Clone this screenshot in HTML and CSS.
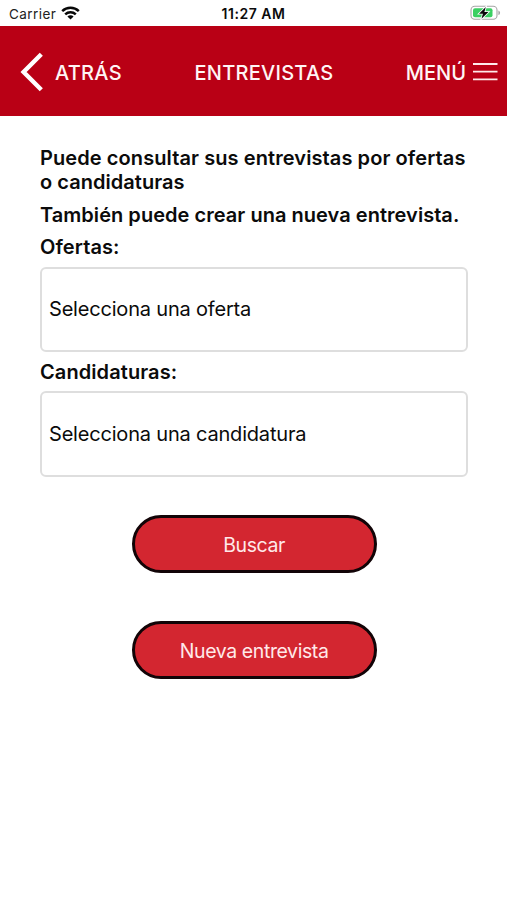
FILE: index.html
```html
<!DOCTYPE html>
<html lang="es">
<head>
<meta charset="utf-8">
<title>Entrevistas</title>
<link rel="stylesheet" href="styles.css">
</head>
<body>
<div class="status">
  <div class="carrier"><span class="carrier-name">Carrier</span>
    <svg class="wifi" width="19" height="14" viewBox="0 0 19 14" fill="none" stroke="#080808" stroke-width="2.5">
      <path d="M1.2 5.1a12 12 0 0 1 16.6 0M4.2 8.3a7.7 7.7 0 0 1 10.6 0"/>
      <path d="M9.5 13.6 6.4 10.5a4.4 4.4 0 0 1 6.2 0z" fill="#080808" stroke="none"/>
    </svg>
  </div>
  <div class="time">11:27 AM</div>
  <svg class="battery" width="31" height="16" viewBox="0 0 31 16">
    <rect x="1" y="1.3" width="26" height="13" rx="3.8" fill="#fff" stroke="#a5a5a5" stroke-width="1.1"/>
    <path d="M28.4 5.5c2.2.8 2.2 3.8 0 4.6z" fill="#a5a5a5"/>
    <rect x="3" y="3.3" width="19.5" height="9" rx="2" fill="#3bd062"/>
    <path d="M15.8 2.1 9 8.7h3.9l-1.4 5 6.9-6.7h-4z" fill="#080808" stroke="#fff" stroke-width="1.6" paint-order="stroke"/>
  </svg>
</div>
<header class="bar">
  <div class="back">
    <svg width="24" height="40" viewBox="0 0 24 40" fill="none" stroke="#fff" stroke-width="4.4"><path d="M22.3 2.3 4.6 20l17.7 17.7"/></svg>
    <span class="back-label">ATRÁS</span>
  </div>
  <h1 class="title">ENTREVISTAS</h1>
  <div class="menu">
    <span class="menu-label">MENÚ</span>
    <svg width="25" height="20" viewBox="0 0 25 20" stroke="#ffe9e9" stroke-width="1.8"><path d="M0 2h24.5M0 9.7h24.5M0 17.4h24.5"/></svg>
  </div>
</header>
<main class="content">
  <p class="text intro"><span class="wide">Puede consultar sus entrevistas por ofertas</span><br>o candidaturas</p>
  <p class="text notice">También puede crear una nueva entrevista.</p>
  <p class="text"><span class="wide">Ofertas:</span></p>
  <div class="field">Selecciona una oferta</div>
  <p class="text second"><span class="wide">Candidaturas:</span></p>
  <div class="field">Selecciona una candidatura</div>
  <div class="actions">
    <button class="btn">Buscar</button>
    <button class="btn">Nueva entrevista</button>
  </div>
</main>
</body>
</html>
```
FILE: styles.css
```css
* { box-sizing: border-box; }
body { margin: 0; background: #fff; color: #0b0b0b; font-family: Inter, "Liberation Sans", sans-serif; white-space: nowrap; }
.status { height: 25.5px; display: grid; grid-template-columns: 1fr auto 1fr; align-items: center; padding: 1px 6px 0 9px; font-size: 13.5px; line-height: 18px; }
.carrier { display: flex; align-items: center; gap: 5px; color: #222; padding-top: 2px; }
.carrier-name { letter-spacing: .42px; }
.wifi { margin-top: -3px; }
.time { font-weight: 600; font-size: 14px; letter-spacing: .55px; padding-top: 2px; margin-left: -3px; }
.battery { justify-self: end; }
.bar { height: 90px; background: #b90015; color: #fff5f5; display: grid; grid-template-columns: 1fr auto 1fr; align-items: center; padding: 3px 9px 0 19px; font-size: 20px; font-weight: 500; line-height: 24px; }
.back { display: flex; align-items: center; gap: 12px; }
.back svg { margin-top: -1px; }
.back-label, .menu-label { padding-top: 2px; }
.back-label { letter-spacing: .3px; }
.title { margin: 0 -11px 0 0; padding-top: 2px; font-size: 20px; font-weight: 500; letter-spacing: .25px; }
.menu { display: flex; align-items: center; justify-content: flex-end; gap: 7px; }
.menu svg { margin-top: -1px; }
.content { padding: 30px 39.5px 0 40px; }
.text { margin: 0 0 8px; font-size: 20px; font-weight: 600; line-height: 24.4px; letter-spacing: .04px; }
.wide { letter-spacing: .09px; }
.text.notice { padding-top: .4px; margin-bottom: 7.6px; }
.field { height: 85.5px; margin-top: -.4px; border: 2px solid #dedede; border-radius: 6px; display: flex; align-items: center; padding: 0 7px; font-size: 20px; line-height: 24px; letter-spacing: -.19px; }
.text.second { margin: 7.5px 0 7.7px; }
.actions { display: flex; flex-direction: column; align-items: center; gap: 47.5px; margin: 38px -.7px 0 0; }
.btn { width: 245px; height: 58.5px; border: 3px solid #120407; border-radius: 30px; background: #d32630; color: #ffe9e9; font: 400 19.5px/24px Inter, "Liberation Sans", sans-serif; letter-spacing: -.4px; padding: 1px 0 0; }
```
